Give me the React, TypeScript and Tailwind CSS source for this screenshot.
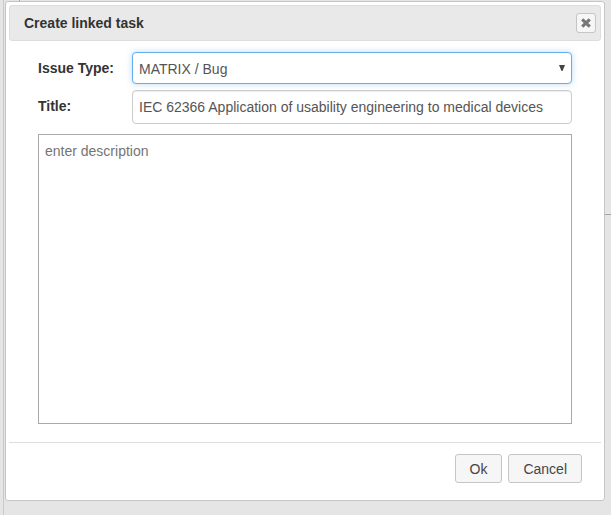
import { useState } from "react";

const issueTypes = ["MATRIX / Bug", "MATRIX / Task", "MATRIX / Story"];

const Backdrop = () => (
    <div className="absolute inset-0 flex overflow-hidden bg-[#e5e5e5]">
        <div className="w-1 border-r border-[#c9c9c9]" />
        <div className="flex-1 pl-[15px]">
            <div className="h-[214px] w-px bg-[#a5a5a5]" />
            <hr className="border-[#a5a5a5]" />
        </div>
    </div>
);

const CloseIcon = () => (
    <svg width="12" height="12" viewBox="0 0 12 12" aria-hidden="true">
        <path d="M2.2 2.4 9.8 9.6M9.8 2.4 2.2 9.6" stroke="#777777" strokeWidth="3.2" />
    </svg>
);

const App = () => {
    const [issueType, setIssueType] = useState(issueTypes[0]);
    const [title, setTitle] = useState("IEC 62366 Application of usability engineering to medical devices");
    const [description, setDescription] = useState("");

    const labelClass = "w-[94px] shrink-0 font-bold text-[#333333]";
    const buttonClass =
        "flex h-[29px] items-center rounded-[3px] border border-[#c5c5c5] bg-[#f6f6f6] px-3.5 text-[#454545] hover:bg-[#ededed]";

    return (
        <div className="relative min-h-screen font-['Liberation_Sans',Arial,sans-serif] text-sm">
            <Backdrop />

            <div className="relative pt-px pr-1.5 pl-[5px]">
                <div role="dialog" aria-labelledby="dialog-title" className="rounded-[3px] border border-[#c5c5c5] bg-white p-[3px]">
                    <div className="flex h-9 items-center justify-between rounded-[3px] border border-[#dddddd] bg-[#e9e9e9] pr-1 pl-3.5">
                        <h1 id="dialog-title" className="font-bold text-[#333333]">
                            Create linked task
                        </h1>
                        <button
                            type="button"
                            aria-label="Close"
                            className="flex h-5 w-5 items-center justify-center rounded-[3px] border border-[#c5c5c5] bg-[#f6f6f6]"
                        >
                            <CloseIcon />
                        </button>
                    </div>

                    <form className="px-[29px] pt-[11px] pb-[18px] text-[#555555]">
                        <div className="flex">
                            <label htmlFor="issue-type" className={`${labelClass} pt-1.5`}>
                                Issue Type:
                            </label>
                            <div className="relative flex-1">
                                <select
                                    id="issue-type"
                                    value={issueType}
                                    onChange={(e) => setIssueType(e.target.value)}
                                    className="block h-8 w-full appearance-none rounded border border-[#66afe9] bg-white px-1.5 pt-0.5 shadow-[0_0_6px_rgba(102,175,233,0.45)] outline-none"
                                >
                                    {issueTypes.map((type) => (
                                        <option key={type}>{type}</option>
                                    ))}
                                </select>
                                <svg width="6" height="6" viewBox="0 0 6 6" className="pointer-events-none absolute top-[13px] right-[7px]" aria-hidden="true">
                                    <path d="M0 0H6L3.5 6H2.5Z" fill="#444444" />
                                </svg>
                            </div>
                        </div>

                        <div className="mt-1.5 flex">
                            <label htmlFor="title" className={`${labelClass} pt-1.5`}>
                                Title:
                            </label>
                            <input
                                id="title"
                                type="text"
                                value={title}
                                onChange={(e) => setTitle(e.target.value)}
                                className="h-[34px] min-w-0 flex-1 rounded border border-[#cccccc] bg-white px-1.5 shadow-[inset_0_1px_1px_rgba(0,0,0,0.075)] outline-none"
                            />
                        </div>

                        <textarea
                            aria-label="Description"
                            placeholder="enter description"
                            value={description}
                            onChange={(e) => setDescription(e.target.value)}
                            className="mt-2.5 block h-[290px] w-full resize-none border border-[#a9a9a9] bg-white px-1.5 py-1.5 outline-none placeholder:text-[#757575]"
                        />
                    </form>

                    <div className="flex justify-end gap-1.5 border-t border-[#dddddd] pt-[11px] pr-[19px] pb-3.5">
                        <button type="button" className={buttonClass}>
                            Ok
                        </button>
                        <button type="button" className={buttonClass}>
                            Cancel
                        </button>
                    </div>
                </div>
            </div>
        </div>
    );
};

export default App;
